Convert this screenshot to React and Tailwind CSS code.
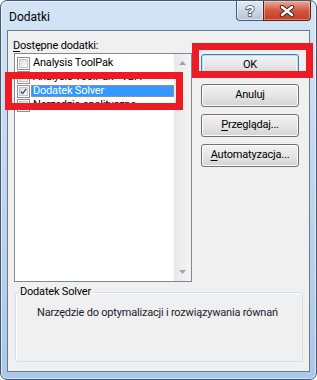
import React from "react";

function Checkbox({ checked }) {
  return (
    <span className="w-[13px] h-[13px] shrink-0 border border-[#8e8f8f] bg-white p-[1px]">
      <span className="flex w-full h-full items-center justify-center border border-[#c4c4c4] bg-gradient-to-br from-[#dcdcdc] to-[#fbfbfb]">
        {checked && (
          <svg width="9" height="9" viewBox="0 0 9 9">
            <path d="M1 4.5 L3.5 7 L8 1" fill="none" stroke="#3b4f8a" strokeWidth="1.6" />
          </svg>
        )}
      </span>
    </span>
  );
}

function Row({ label, checked, selected }) {
  return (
    <div className="flex items-center h-[14px]">
      <span className="ml-[2px] flex">
        <Checkbox checked={checked} />
      </span>
      <span
        className={
          selected
            ? "ml-[1px] flex-1 h-[12px] leading-[12px] px-[2px] bg-[#3399ff] text-white outline outline-1 outline-dotted outline-[#e98b2f] -outline-offset-1"
            : "ml-[1px] px-[2px] leading-[12px]"
        }
      >
        {label}
      </span>
    </div>
  );
}

function Btn({ children, primary }) {
  return (
    <div
      className={
        "h-[23px] rounded-[3px] border flex items-center justify-center bg-gradient-to-b from-[#f2f2f2] via-[#e6e6e6] to-[#d3d3d3] text-black " +
        (primary
          ? "border-[#3c7fb1] shadow-[inset_0_0_0_1px_#b6e3fa,inset_0_0_0_2px_#e9f6fd]"
          : "border-[#707070] shadow-[inset_0_0_0_1px_#fcfcfc]")
      }
    >
      {children}
    </div>
  );
}

export default function App() {
  return (
    <div className="w-[317px] h-[380px] bg-white font-['Roboto','Liberation_Sans',sans-serif] text-[11px] tracking-[-0.2px] text-black relative">
      <div className="w-full h-full rounded-[7px] border border-[#44586f] bg-gradient-to-b from-[#d3e4f6] via-[#bfd6ef] to-[#aac8ea] shadow-[inset_0_0_0_1px_rgba(255,255,255,0.55)] flex flex-col px-[6px] pb-[7px]">
        {/* title bar */}
        <div className="h-[29px] flex items-start shrink-0">
          <span className="mt-[7px] ml-[2px] text-[12px] tracking-normal text-black">Dodatki</span>
          <div className="ml-auto flex -mr-[1px]">
            <div className="w-[27px] h-[20px] rounded-bl-[4px] border border-[#4a5c74] border-t-0 border-r-0 bg-gradient-to-b from-[#e3ebf4] to-[#b6c5d7] flex items-center justify-center shadow-[inset_0_0_0_1px_rgba(255,255,255,0.5)]">
              <svg width="14" height="16" viewBox="0 0 14 16">
                <text x="7" y="13" textAnchor="middle" fontSize="15" fontWeight="bold" fontFamily="Liberation Sans, sans-serif" fill="#fff" stroke="#4b5563" strokeWidth="1.6" paintOrder="stroke">?</text>
              </svg>
            </div>
            <div className="w-[48px] h-[20px] rounded-br-[4px] border border-[#5a1e17] border-t-0 bg-gradient-to-b from-[#e9a99a] via-[#d3573f] to-[#c43d22] flex items-center justify-center shadow-[inset_0_0_0_1px_rgba(255,220,210,0.45)]">
              <svg width="16" height="12" viewBox="0 0 16 12">
                <path d="M3 2 L13 10 M13 2 L3 10" stroke="#3a2a28" strokeWidth="4.4" strokeLinecap="round" />
                <path d="M3 2 L13 10 M13 2 L3 10" stroke="#ffffff" strokeWidth="2.4" strokeLinecap="round" />
              </svg>
            </div>
          </div>
        </div>
        {/* client */}
        <div className="flex-1 border border-[#6c7b8c] bg-[#f0f0f0] flex flex-col">
          <div className="mt-[8px] ml-[5px] h-[14px] leading-[14px]">
            <span className="underline underline-offset-2">D</span>ostępne dodatki:
          </div>
          <div className="flex">
            <div className="ml-[6px] w-[178px] h-[229px] border border-[#828790] bg-white flex">
              <div className="flex-1 pt-[2px] overflow-hidden">
                <Row label="Analysis ToolPak" />
                <Row label="Analysis ToolPak - VBA" />
                <Row label="Dodatek Solver" checked selected />
                <Row label="Narzędzia analityczne" />
              </div>
              <div className="w-[17px] bg-gradient-to-r from-[#e8e8e8] to-[#f4f4f4] flex flex-col justify-between items-center py-[7px]">
                <svg width="7" height="4" viewBox="0 0 7 4">
                  <path d="M0 4 L3.5 0 L7 4 Z" fill="#a3a3a3" />
                </svg>
                <svg width="7" height="4" viewBox="0 0 7 4">
                  <path d="M0 0 L3.5 4 L7 0 Z" fill="#a3a3a3" />
                </svg>
              </div>
            </div>
            <div className="ml-[9px] mt-[1px] w-[98px] flex flex-col gap-[7px]">
              <Btn primary>OK</Btn>
              <Btn>Anuluj</Btn>
              <Btn>
                <span>
                  <span className="underline underline-offset-2">P</span>rzeglądaj...
                </span>
              </Btn>
              <Btn>
                <span>
                  <span className="underline underline-offset-2">A</span>utomatyzacja...
                </span>
              </Btn>
            </div>
          </div>
          <fieldset className="mt-[3px] ml-[7px] w-[288px] h-[77px] border border-[#d5dfe5] rounded-[3px] shadow-[inset_1px_1px_0_#fff] px-[3px]">
            <legend className="px-[1px] leading-[14px]">Dodatek Solver</legend>
            <div className="ml-[18px] mt-[7px] leading-[14px] text-[#1b1b2e]">
              Narzędzie do optymalizacji i rozwiązywania równań
            </div>
          </fieldset>
        </div>
      </div>
      {/* annotation frames */}
      <div className="absolute left-[5px] top-[72px] w-[178px] h-[38px] border-[7px] border-[#ed1c24]" />
      <div className="absolute left-[192px] top-[43px] w-[121px] h-[35px] border-[7px] border-[#ed1c24]" />
    </div>
  );
}
